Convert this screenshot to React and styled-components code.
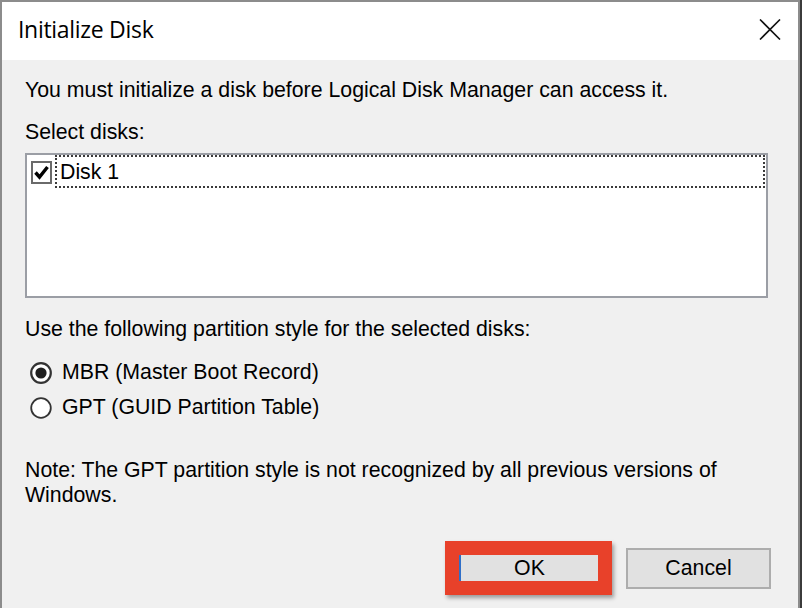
import React, { useState } from 'react';
import styled, { createGlobalStyle } from 'styled-components';

const GlobalStyle = createGlobalStyle`
  html, body {
    margin: 0;
    padding: 0;
    background: #3b3b3b;
  }
  * {
    box-sizing: border-box;
  }
`;

const Window = styled.div`
  width: 800px;
  height: 608px;
  background: #f0f0f0;
  border: 2px solid #8c8c8c;
  border-bottom: none;
  display: flex;
  flex-direction: column;
  overflow: hidden;
`;

const TitleBar = styled.div`
  height: 58px;
  background: #ffffff;
  display: flex;
  justify-content: space-between;
  align-items: flex-start;
  padding: 12px 17px 0 16px;
`;

const Title = styled.div`
  font-family: "Open Sans", "Noto Sans", sans-serif;
  font-size: 23px;
  line-height: 30px;
  color: #000;
  letter-spacing: -0.3px;
`;

const CloseIcon = styled.svg`
  margin-top: 5px;
  width: 22px;
  height: 21px;
`;

const Body = styled.div`
  flex: 1;
  display: flex;
  flex-direction: column;
  padding: 18px 27px 0 23px;
  font-family: "Liberation Sans", Arial, sans-serif;
  font-size: 21.3px;
  line-height: 25px;
  color: #000;
`;

const Text = styled.div`
  margin-top: ${(p) => p.$gap || 0}px;
`;

const ListBox = styled.div`
  margin-top: 8px;
  margin-right: 3px;
  height: 145px;
  background: #ffffff;
  border: 2px solid #9b9ea5;
`;

const ListItem = styled.div`
  display: flex;
  align-items: center;
  padding-left: 4px;
`;

const CheckBox = styled.svg`
  width: 21px;
  height: 23px;
  margin-top: 2px;
  flex-shrink: 0;
`;

const ItemLabel = styled.div`
  flex: 1;
  margin-left: 3px;
  margin-right: 1px;
  border: 2px dotted #3a3a3a;
  padding: 3px 0 1px 3px;
`;

const RadioGroup = styled.div`
  margin-top: 13px;
  display: flex;
  flex-direction: column;
`;

const RadioRow = styled.label`
  height: 35px;
  display: flex;
  align-items: center;
  padding-left: 5px;
  cursor: default;
`;

const RadioIcon = styled.svg`
  width: 22px;
  height: 22px;
  flex-shrink: 0;
  margin-right: 10px;
`;

const ButtonRow = styled.div`
  margin-top: 33px;
  display: flex;
  justify-content: flex-end;
  align-items: center;
  gap: 14px;
`;

const Highlight = styled.div`
  border: 14px solid #e8412a;
  box-shadow: 2px 3px 4px rgba(0, 0, 0, 0.35);
`;

const Button = styled.button`
  font-family: "Liberation Sans", Arial, sans-serif;
  font-size: 21.3px;
  color: #000;
  background: #e1e1e1;
  width: ${(p) => p.$w}px;
  height: ${(p) => p.$h}px;
  padding: 0;
  border: ${(p) => (p.$focused ? 'none' : '2px solid #adadad')};
  border-left: ${(p) => (p.$focused ? '2px solid #2f6fc8' : '2px solid #adadad')};
  display: flex;
  align-items: center;
  justify-content: center;
  line-height: 25px;
`;

function Radio({ checked }) {
  return (
    <RadioIcon viewBox="0 0 22 22">
      <circle cx="11" cy="11" r="9.8" fill="#fff" stroke="#333" strokeWidth={checked ? 2.2 : 1.8} />
      {checked && <circle cx="11" cy="11" r="5.6" fill="#1f1f1f" />}
    </RadioIcon>
  );
}

export default function App() {
  const [style, setStyle] = useState('mbr');

  return (
    <>
      <GlobalStyle />
      <Window>
        <TitleBar>
          <Title>Initialize Disk</Title>
          <CloseIcon viewBox="0 0 22 21">
            <path d="M1 0.5 L21 20.5 M21 0.5 L1 20.5" stroke="#111" strokeWidth="1.6" fill="none" />
          </CloseIcon>
        </TitleBar>
        <Body>
          <Text>You must initialize a disk before Logical Disk Manager can access it.</Text>
          <Text $gap={17}>Select disks:</Text>
          <ListBox>
            <ListItem>
              <CheckBox viewBox="0 0 21 23">
                <rect x="1" y="1" width="19" height="21" fill="#fff" stroke="#6a6a6a" strokeWidth="2" />
                <path d="M4.5 11.5 L8.5 16 L16.5 6" stroke="#000" strokeWidth="3.4" fill="none" />
              </CheckBox>
              <ItemLabel>Disk 1</ItemLabel>
            </ListItem>
          </ListBox>
          <Text $gap={19}>Use the following partition style for the selected disks:</Text>
          <RadioGroup>
            <RadioRow onClick={() => setStyle('mbr')}>
              <Radio checked={style === 'mbr'} />
              MBR (Master Boot Record)
            </RadioRow>
            <RadioRow onClick={() => setStyle('gpt')}>
              <Radio checked={style === 'gpt'} />
              GPT (GUID Partition Table)
            </RadioRow>
          </RadioGroup>
          <Text $gap={33}>
            Note: The GPT partition style is not recognized by all previous versions of
            <br />
            Windows.
          </Text>
          <ButtonRow>
            <Highlight>
              <Button $w={139} $h={26} $focused>OK</Button>
            </Highlight>
            <Button $w={145} $h={41}>Cancel</Button>
          </ButtonRow>
        </Body>
      </Window>
    </>
  );
}
